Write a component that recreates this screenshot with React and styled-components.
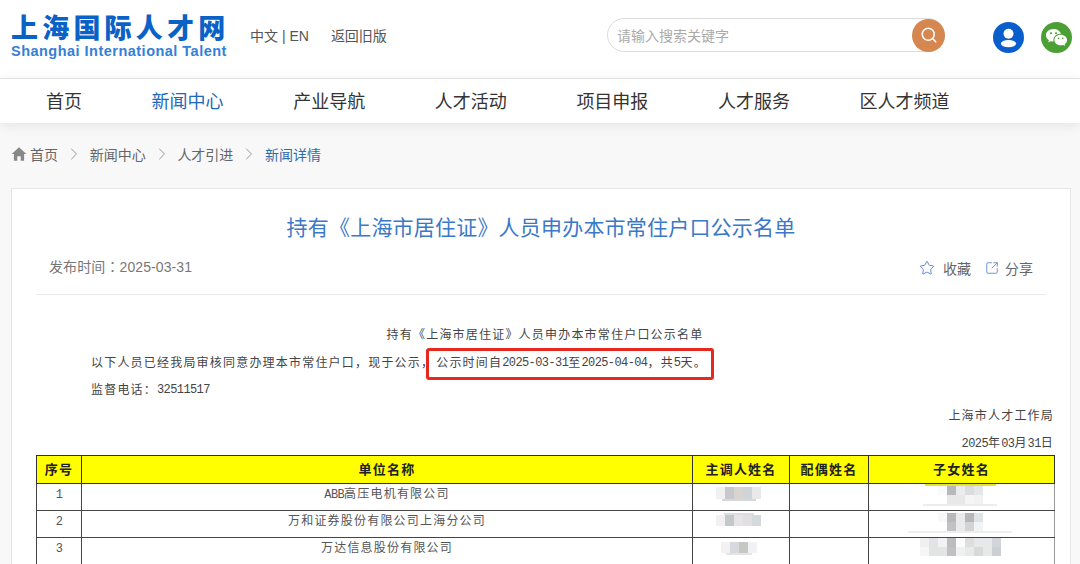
import styled, { createGlobalStyle } from "styled-components"
import { ChevronRight, Search, Star, SquareArrowOutUpRight } from "lucide-react"
import { RiWechatFill } from "react-icons/ri"
import { IoMdHome } from "react-icons/io"

const CJK = `"Liberation Sans", "Noto Sans CJK SC", sans-serif`

const GlobalStyle = createGlobalStyle`
    html, body {
        margin:0;
        padding:0;
        height:564px;
        overflow:hidden;
        background:#f8f8f8;
        font-family:${CJK};
    }
`
const Header = styled.header`
    height:78px;
    background:#fff;
    border-bottom:1px solid #e8e8e8;
    display:flex;
    align-items:center;
    padding:0 8px 0 11px;
`
const Logo = styled.div`
    flex:0 0 220px;
    margin-top:-5px;
`
const LogoCn = styled.div`
    font-size:27px;
    line-height:28px;
    font-weight:900;
    color:#0a62c6;
    letter-spacing:4.2px;
    white-space:nowrap;
`
const LogoEn = styled.div`
    font-size:14.5px;
    line-height:16px;
    font-weight:700;
    color:#3480d6;
    letter-spacing:0.48px;
    white-space:nowrap;
`
const TopLinks = styled.div`
    display:flex;
    flex:none;
    gap:22px;
    margin-left:19px;
    margin-top:-9px;
    font-size:14px;
    color:#555;
    white-space:nowrap;
`
const SearchBox = styled.div`
    margin-left:auto;
    width:338px;
    height:34px;
    box-sizing:border-box;
    border:1px solid #dcdcdc;
    border-radius:17px;
    display:flex;
    align-items:center;
    justify-content:space-between;
    padding-left:9px;
    margin-top:-8px;
    font-size:14px;
    color:#aaa;
`
const SearchButton = styled.div`
    width:33px;
    height:33px;
    margin-right:-1px;
    border-radius:50%;
    background:#d5874f;
    color:#fff;
    display:flex;
    align-items:center;
    justify-content:center;
`
const RoundIcon = styled.div`
    width:31px;
    height:31px;
    flex:none;
    border-radius:50%;
    background:${props => props.$bg};
    color:#fff;
    display:flex;
    align-items:center;
    justify-content:center;
    margin-left:${props => props.$left}px;
    margin-top:-4px;
`
const Nav = styled.nav`
    position:relative;
    height:42px;
    padding:0 0 2px 46px;
    background:#fff;
    display:flex;
    gap:69.6px;
    align-items:center;
    font-size:18px;
    color:#333;
    box-shadow:0 2px 12px rgba(0,0,0,.09);
`
const NavItem = styled.span`
    color:${props => (props.$active ? "#1f68b8" : "#333")};
`
const Crumbs = styled.div`
    height:61px;
    padding:0 0 4px 11px;
    display:flex;
    align-items:center;
    font-size:14px;
    color:#666;
`
const CrumbLink = styled.span`
    color:${props => (props.$current ? "#2f6ea8" : "#666")};
`
const CrumbIcon = styled.span`
    display:flex;
    width:20px;
    color:#888;
    margin-left:-1px;
`
const CrumbArrow = styled.span`
    display:flex;
    color:#999;
    width:31.7px;
    justify-content:center;
`
const Card = styled.main`
    width:1060px;
    height:400px;
    margin-left:11px;
    box-sizing:border-box;
    background:#fff;
    border:1px solid #e6e6e6;
    padding:0 24px;
`
const Title = styled.h1`
    margin:24px 0 0;
    font-size:21px;
    line-height:30px;
    letter-spacing:.2px;
    font-weight:400;
    color:#3a78c8;
    text-align:center;
    white-space:nowrap;
`
const Meta = styled.div`
    display:flex;
    align-items:center;
    justify-content:space-between;
    height:44px;
    margin-top:1px;
    padding:0 13px 6px;
    border-bottom:1px solid #eaeaea;
    font-size:14px;
    color:#777;
`
const PublishDate = styled.span`
    letter-spacing:.1px;
`
const Colon = styled.span`
    font-family:"Noto Sans CJK TC", sans-serif;
`
const Actions = styled.div`
    display:flex;
    align-items:center;
    color:#666;
    margin-top:4px;
`
const Action = styled.span`
    display:flex;
    align-items:center;
    gap:${props => props.$gap}px;
    margin-left:${props => props.$left}px;
    & svg {
        color:#5f86d8;
    }
`
const Doc = styled.section`
    margin-right:-8px;
    padding-top:27px;
    font-size:12px;
    line-height:27px;
    letter-spacing:1.2px;
    color:#444;
`
const DocTitle = styled.div`
    text-align:center;
    height:28px;
`
const DocLine = styled.div`
    padding-left:55px;
    height:27px;
    display:flex;
    align-items:center;
    white-space:nowrap;
`
const Mark = styled.span`
    position:relative;
    margin-left:-8px;
    width:288px;
    height:32px;
    box-sizing:border-box;
    padding-left:7px;
    background:#fff;
    border:3px solid #e8281e;
    border-radius:3px;
    display:flex;
    align-items:center;
`
const Num = styled.span`
    font-family:"Liberation Mono", monospace;
    font-size:12px;
    letter-spacing:-.6px;
`
const DocRight = styled.div`
    text-align:right;
    height:27px;
    margin-top:${props => (props.$pull ? -1 : 0)}px;
`
const Table = styled.table`
    border-collapse:collapse;
    table-layout:fixed;
    width:1018px;
    margin-top:-2px;
`
const Th = styled.th`
    width:${props => props.$w}px;
    height:27px;
    padding:0;
    background:#ff0;
    border:1px solid #333;
    font-size:13px;
    line-height:16px;
    color:#222;
    font-weight:700;
`
const Td = styled.td`
    height:26px;
    padding:0;
    border:1px solid #444;
    border-right-color:${props => (props.$last ? "#999" : "#444")};
    text-align:center;
    vertical-align:top;
    line-height:21px;
    color:#555;
`
const Mosaic = styled.div`
    display:inline-flex;
    flex-direction:column;
    align-items:center;
    vertical-align:top;
    margin:${props => props.$top}px ${props => props.$shift}px 0 0;
`
const MosaicRow = styled.div`
    display:flex;
`
const MosaicCell = styled.div`
    width:9px;
    height:${props => props.$h}px;
    background:${props => props.$c};
`
const Streak = styled.div`
    width:${props => props.$w}px;
    height:2px;
    background:${props => props.$c};
`

const rows = [
  {
    no: "1",
    unit: <><Num>ABB</Num>高压电机有限公司</>,
    parent: { top: 3, h: 12, under: { w: 34, c: "#d4d8dc" }, cells: [["#f2f1f1", "#c6c8cb", "#d8d4cf", "#ced4d8", "#e9e9e9"]] },
    child: { top: 0, h: 9, over: { w: 71, c: "#e6e23c" }, under: { w: 74, c: "#ededed" }, cells: [["#fafafa", "#b9b9bc", "#ececee", "#dcdcdc", "#e4e7e9"], ["#fff", "#e8e8e8", "#e6e8ea", "#f5f5f5", "#f2f2f2"]] },
  },
  {
    no: "2",
    unit: <>万和证券股份有限公司上海分公司</>,
    parent: { top: 2, h: 11, over: { w: 30, c: "#dddddd" }, cells: [["#f2f0f0", "#c4c8cb", "#e6e4e4", "#e0dfe2", "#d4d9dc"]] },
    child: { top: 2, h: 9, under: { w: 104, c: "#eeeeee" }, cells: [["#f8f8f8", "#b8b8ba", "#e8eaec", "#b8b6b8", "#dfe3e6"], ["#fff", "#c2c2c4", "#e8eaec", "#d2d4d4", "#f2f4f4"]] },
  },
  {
    no: "3",
    unit: <>万达信息股份有限公司</>,
    parent: { top: 4, h: 11, under: { w: 26, c: "#e2e4e6" }, cells: [["#f3f1f1", "#d6dade", "#c6c8c4", "#f0f2f5"]] },
    child: { top: 0, h: 9, cells: [["#eef0f1", "#e2e3e6", "#f2f2f2", "#bcbcc0", "#fbfbfb", "#dedede", "#e8e8ea", "#e6e8ea", "#d2d6da"], ["#f6f6f6", "#e2e4e4", "#e4e4e4", "#c0c0c2", "#eef0f1", "#e8eaea", "#d8dada", "#e8e8e8", "#ccd0d4"]] },
  },
]

const Blur = ({ data, shift }) => (
  <Mosaic $top={data.top} $shift={shift}>
    {data.over && <Streak $w={data.over.w} $c={data.over.c} />}
    {data.cells.map((row, r) => (
      <MosaicRow key={r}>
        {row.map((c, i) => <MosaicCell key={i} $c={c} $h={data.h} />)}
      </MosaicRow>
    ))}
    {data.under && <Streak $w={data.under.w} $c={data.under.c} />}
  </Mosaic>
)

const UserIcon = () => (
  <svg width="31" height="31" viewBox="0 0 31 31" fill="#fff">
    <circle cx="15.5" cy="11.8" r="5" />
    <ellipse cx="15.5" cy="21.6" rx="7.6" ry="3.7" />
  </svg>
)

const App = () => {
  return (
    <>
      <GlobalStyle />
      <Header>
        <Logo>
          <LogoCn>上海国际人才网</LogoCn>
          <LogoEn>Shanghai International Talent</LogoEn>
        </Logo>
        <TopLinks>
          <span>中文 | EN</span>
          <span>返回旧版</span>
        </TopLinks>
        <SearchBox>
          请输入搜索关键字
          <SearchButton><Search size={18} strokeWidth={2} /></SearchButton>
        </SearchBox>
        <RoundIcon $bg="#0a5ecb" $left={48}><UserIcon /></RoundIcon>
        <RoundIcon $bg="#4b9f35" $left={17}><RiWechatFill size={23} /></RoundIcon>
      </Header>
      <Nav>
        <NavItem>首页</NavItem>
        <NavItem $active>新闻中心</NavItem>
        <NavItem>产业导航</NavItem>
        <NavItem>人才活动</NavItem>
        <NavItem>项目申报</NavItem>
        <NavItem>人才服务</NavItem>
        <NavItem>区人才频道</NavItem>
      </Nav>
      <Crumbs>
        <CrumbIcon><IoMdHome size={18} /></CrumbIcon>
        <CrumbLink>首页</CrumbLink>
        <CrumbArrow><ChevronRight size={20} strokeWidth={1.2} /></CrumbArrow>
        <CrumbLink>新闻中心</CrumbLink>
        <CrumbArrow><ChevronRight size={20} strokeWidth={1.2} /></CrumbArrow>
        <CrumbLink>人才引进</CrumbLink>
        <CrumbArrow><ChevronRight size={20} strokeWidth={1.2} /></CrumbArrow>
        <CrumbLink $current>新闻详情</CrumbLink>
      </Crumbs>
      <Card>
        <Title>持有《上海市居住证》人员申办本市常住户口公示名单</Title>
        <Meta>
          <PublishDate>发布时间<Colon>：</Colon>2025-03-31</PublishDate>
          <Actions>
            <Action $gap={8}><Star size={16} strokeWidth={1.5} />收藏</Action>
            <Action $gap={6} $left={14}><SquareArrowOutUpRight size={14} strokeWidth={1.5} />分享</Action>
          </Actions>
        </Meta>
        <Doc>
          <DocTitle>持有《上海市居住证》人员申办本市常住户口公示名单</DocTitle>
          <DocLine>
            以下人员已经我局审核同意办理本市常住户口，现于公示，
            <Mark>公示时间自<Num>2025-03-31</Num>至<Num>2025-04-04</Num>，共<Num>5</Num>天。</Mark>
          </DocLine>
          <DocLine>监督电话：<Num>32511517</Num></DocLine>
          <DocRight $pull>上海市人才工作局</DocRight>
          <DocRight><Num>2025</Num>年<Num>03</Num>月<Num>31</Num>日</DocRight>
          <Table>
            <thead>
              <tr>
                <Th $w={44}>序号</Th>
                <Th $w={610}>单位名称</Th>
                <Th $w={96}>主调人姓名</Th>
                <Th $w={78}>配偶姓名</Th>
                <Th $w={185}>子女姓名</Th>
              </tr>
            </thead>
            <tbody>
              {rows.map(row => (
                <tr key={row.no}>
                  <Td><Num>{row.no}</Num></Td>
                  <Td>{row.unit}</Td>
                  <Td><Blur data={row.parent} shift={5} /></Td>
                  <Td />
                  <Td $last><Blur data={row.child} shift={3} /></Td>
                </tr>
              ))}
            </tbody>
          </Table>
        </Doc>
      </Card>
    </>
  )
}

export default App
